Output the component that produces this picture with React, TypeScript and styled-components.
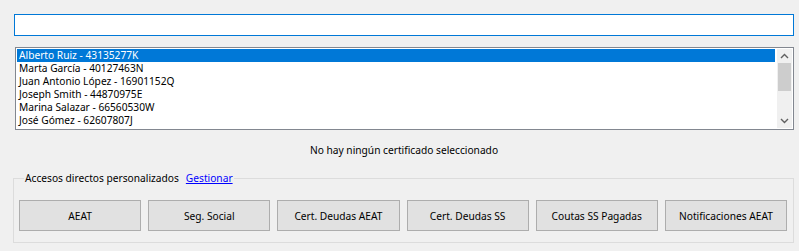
import styled, { createGlobalStyle } from 'styled-components';

const GlobalStyle = createGlobalStyle`
  html, body {
    margin: 0;
    padding: 0;
    background: #f0f0f0;
  }
  body {
    font-family: "Noto Sans", "Open Sans", sans-serif;
    font-size: 10.2px;
    color: #000;
  }
`;

const Window = styled.div`
  width: 799px;
  height: 251px;
  box-sizing: border-box;
  padding: 14px 5px 0 14px;
  display: flex;
  flex-direction: column;
`;

const SearchBox = styled.input`
  box-sizing: border-box;
  width: 780px;
  height: 22px;
  margin: 0;
  border: 1px solid #0078d7;
  background: #fff;
  outline: none;
  font: inherit;
  padding: 0 3px;
`;

const ListBox = styled.div`
  box-sizing: border-box;
  width: 779px;
  height: 83px;
  margin-top: 11px;
  margin-left: 1px;
  border: 1px solid #828790;
  background: #fff;
  display: flex;
  padding: 1px;
`;

const Items = styled.div`
  flex: 1;
  display: flex;
  flex-direction: column;
  overflow: hidden;
`;

const Item = styled.div<{ $selected?: boolean }>`
  height: 13px;
  line-height: 13px;
  padding-left: 2px;
  white-space: nowrap;
  background: ${(p) => (p.$selected ? '#0078d7' : 'transparent')};
  color: ${(p) => (p.$selected ? '#fff' : '#000')};
`;

const ScrollBar = styled.div`
  width: 15px;
  margin-left: 2px;
  background: #f0f0f0;
  display: flex;
  flex-direction: column;
  align-items: stretch;
`;

const Arrow = styled.div`
  height: 14px;
  display: flex;
  align-items: center;
  justify-content: center;
`;

const Track = styled.div`
  flex: 1;
  display: flex;
  flex-direction: column;
  padding: 0 1px;
`;

const Thumb = styled.div`
  height: 28px;
  background: #cdcdcd;
`;

const Status = styled.div`
  margin-top: 13px;
  text-align: center;
  height: 14px;
  line-height: 14px;
`;

const Group = styled.fieldset`
  box-sizing: border-box;
  width: 781px;
  height: 72px;
  margin: 14px 0 0 -1px;
  padding: 0 6px 0 5px;
  border: 1px solid #dcdcdc;
  display: flex;
  align-items: flex-start;
`;

const Legend = styled.legend`
  padding: 0 1px;
  margin-left: 5px;
  line-height: 14px;
  display: flex;
  gap: 7px;
`;

const Link = styled.a`
  color: #0000ff;
  text-decoration: underline;
`;

const ButtonRow = styled.div`
  margin-top: 15px;
  display: flex;
  gap: 7px;
  width: 100%;
`;

const Button = styled.button`
  box-sizing: border-box;
  flex: 1;
  height: 31px;
  margin: 0;
  border: 1px solid #adadad;
  background: #e1e1e1;
  font: inherit;
  color: #000;
  padding: 0;
`;

const people = [
  'Alberto Ruiz - 43135277K',
  'Marta García - 40127463N',
  'Juan Antonio López - 16901152Q',
  'Joseph Smith - 44870975E',
  'Marina Salazar - 66560530W',
  'José Gómez - 62607807J',
];

const shortcuts = [
  'AEAT',
  'Seg. Social',
  'Cert. Deudas AEAT',
  'Cert. Deudas SS',
  'Coutas SS Pagadas',
  'Notificaciones AEAT',
];

const Chevron = ({ up }: { up?: boolean }) => (
  <svg width="9" height="6" viewBox="0 0 9 6">
    <path
      d={up ? 'M1 5 L4.5 1.5 L8 5' : 'M1 1 L4.5 4.5 L8 1'}
      fill="none"
      stroke="#606060"
      strokeWidth="1.4"
    />
  </svg>
);

export default function App() {
  return (
    <>
      <GlobalStyle />
      <Window>
        <SearchBox type="text" />
        <ListBox>
          <Items>
            {people.map((p, i) => (
              <Item key={p} $selected={i === 0}>
                {p}
              </Item>
            ))}
          </Items>
          <ScrollBar>
            <Arrow>
              <Chevron up />
            </Arrow>
            <Track>
              <Thumb />
            </Track>
            <Arrow>
              <Chevron />
            </Arrow>
          </ScrollBar>
        </ListBox>
        <Status>No hay ningún certificado seleccionado</Status>
        <Group>
          <Legend>
            <span>Accesos directos personalizados</span>
            <Link href="#">Gestionar</Link>
          </Legend>
          <ButtonRow>
            {shortcuts.map((s) => (
              <Button key={s}>{s}</Button>
            ))}
          </ButtonRow>
        </Group>
      </Window>
    </>
  );
}
